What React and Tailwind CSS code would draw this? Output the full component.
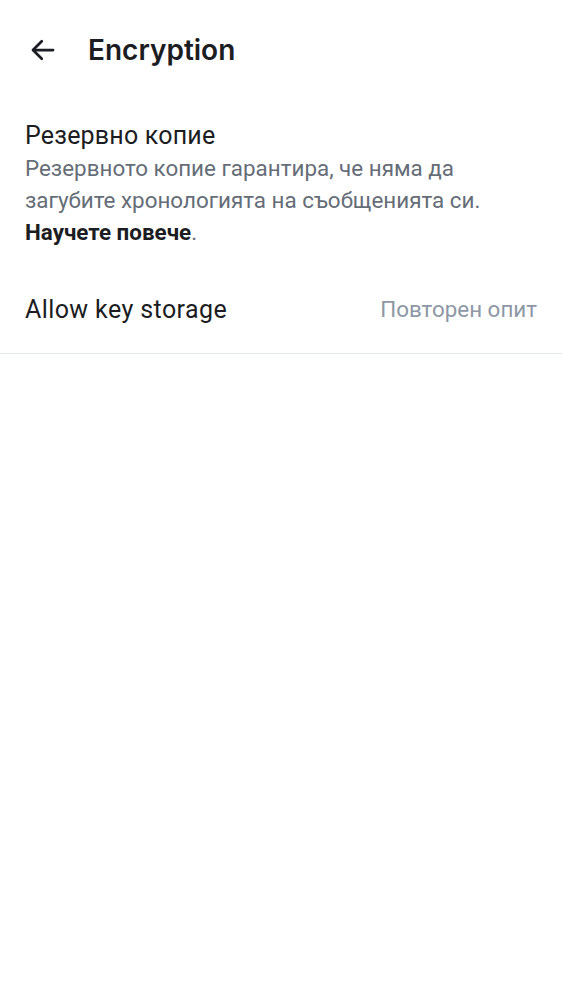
import React from 'react';

export default function App() {
  return (
    <div className="min-h-screen bg-white" style={{ fontFamily: 'Roboto, "Noto Sans", sans-serif' }}>
      {/* Top bar */}
      <div className="flex h-[100px] items-center px-[28px] gap-[30px]">
        <button className="text-[#1b1d22]">
          <svg width="30" height="30" viewBox="0 0 24 24" fill="none" stroke="currentColor" strokeWidth="2.2" strokeLinecap="round" strokeLinejoin="round">
            <path d="M20 12H4.5" />
            <path d="M11 5l-7 7 7 7" />
          </svg>
        </button>
        <h1 className="text-[28px] font-semibold text-[#1b1d22]" style={{ fontFamily: 'Inter, sans-serif' }}>
          Encryption
        </h1>
      </div>

      {/* Backup section */}
      <div className="px-[25px] pt-[20px]">
        <p className="text-[25px] leading-[32px] tracking-[0.2px] text-[#1b1d22]">Резервно копие</p>
        <p className="text-[22.4px] leading-[32px] text-[#656d77]">
          Резервното копие гарантира, че няма да загубите хронологията на съобщенията си.{' '}
          <span className="font-bold text-[#1b1d22]">Научете повече</span>.
        </p>
      </div>

      {/* Key storage row */}
      <div className="mt-[18px] flex h-[88px] items-center justify-between border-b border-[#e1e6ec] px-[25px]">
        <span className="text-[25px] tracking-[0.4px] text-[#1b1d22]">Allow key storage</span>
        <span className="text-[22.4px] text-[#8d97a5]">Повторен опит</span>
      </div>
    </div>
  );
}
